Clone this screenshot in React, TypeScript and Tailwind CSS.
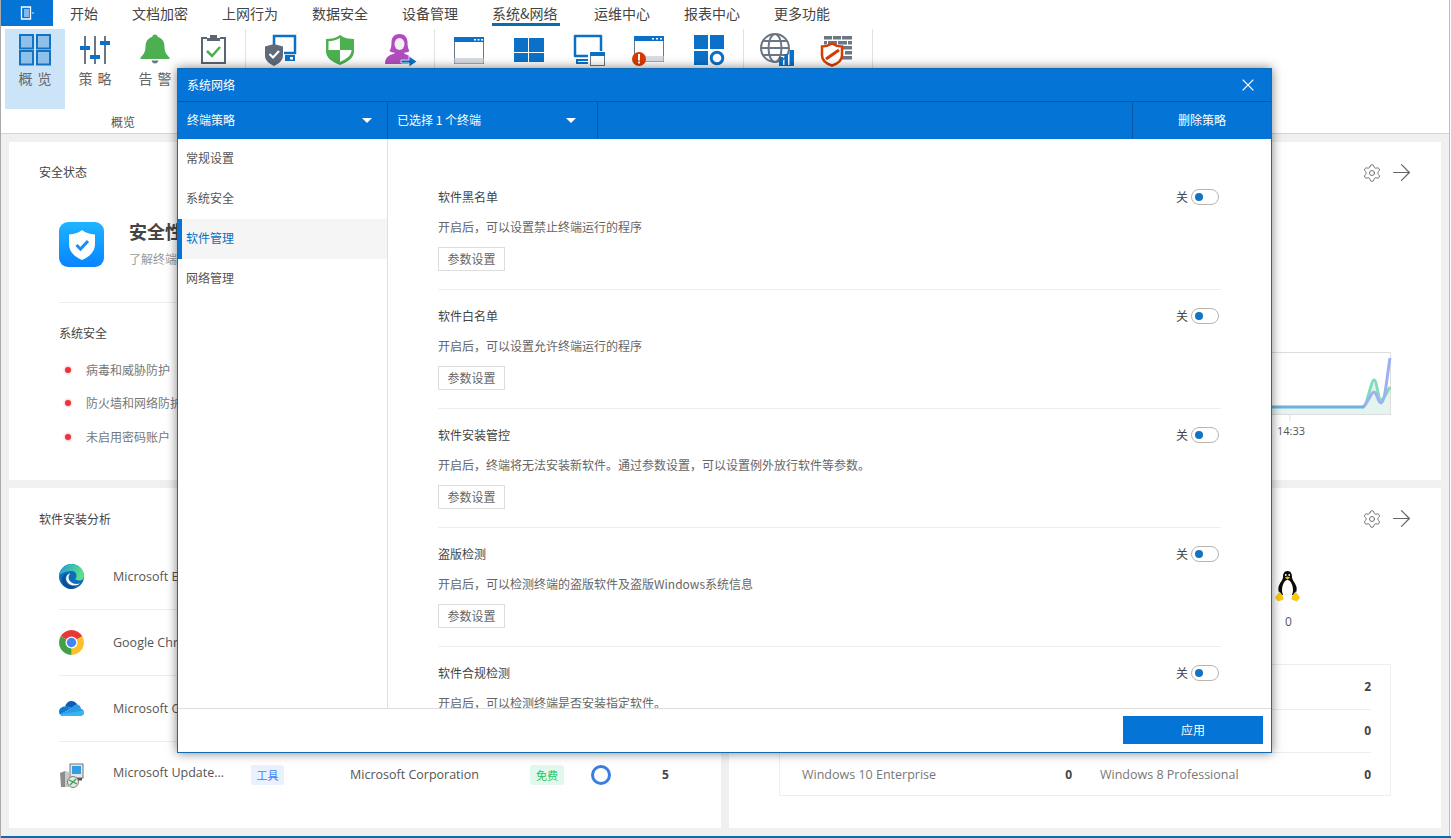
import { ArrowRight, Settings, X } from "lucide-react";

const TABS = ["开始", "文档加密", "上网行为", "数据安全", "设备管理", "系统&网络", "运维中心", "报表中心", "更多功能"];
const SECTIONS = [
  { title: "软件黑名单", desc: "开启后，可以设置禁止终端运行的程序" },
  { title: "软件白名单", desc: "开启后，可以设置允许终端运行的程序" },
  { title: "软件安装管控", desc: "开启后，终端将无法安装新软件。通过参数设置，可以设置例外放行软件等参数。" },
  { title: "盗版检测", desc: "开启后，可以检测终端的盗版软件及盗版Windows系统信息" },
  { title: "软件合规检测", desc: "开启后，可以检测终端是否安装指定软件。" },
];
const BLUE = "#0a70c8";
const GRAY = "#6b7785";
const GREEN = "#4caf50";
const RED = "#d83b01";

const Ico = ({ children }: { children: React.ReactNode }) => (
  <svg width="36" height="36" viewBox="0 0 36 36" className="overflow-visible">
    {children}
  </svg>
);

const IconOverview = () => (
  <Ico>
    {[[3, 3], [20, 3], [3, 19], [20, 19]].map(([x, y]) => (
      <rect key={`${x}-${y}`} x={x} y={y} width="13" height="13.5" fill="#8fc0ea" stroke="#1272c4" strokeWidth="2" />
    ))}
  </Ico>
);

const IconStrategy = () => (
  <Ico>
    <path d="M8 4v28M18 4v28M28 4v28" stroke={GRAY} strokeWidth="2" />
    <path d="M3 14h10v4H3zM13 23h10v4H13zM23 9h10v4H23z" fill={BLUE} />
  </Ico>
);

const IconBell = () => (
  <Ico>
    <path d="M18 2.500c1.700 0 2.600 1 2.800 2.400 4.700 1.300 6.700 5 6.700 10 0 5.200 2.300 7.700 5 10.600v1.500H3.500v-1.500c2.700-2.900 5-5.400 5-10.600 0-5 2-8.700 6.700-10C15.400 3.500 16.300 2.500 18 2.500z" fill={GREEN} />
    <path d="M14.500 28.500h7c-.5 2-1.800 3-3.500 3s-3-1-3.500-3z" fill={GRAY} />
  </Ico>
);

const IconClipboard = () => (
  <Ico>
    <path d="M12 6H7v25h23V6h-5" fill="#fff" stroke="#5a6672" strokeWidth="2" />
    <path d="M15 6V3h7v3h3v3H12V6z" fill="#5a6672" />
    <path d="M12 19l5 5 8-9" fill="none" stroke={GREEN} strokeWidth="2.500" />
  </Ico>
);

const IconShieldMonitor = () => (
  <Ico>
    <path d="M9 19V4h21v17h-11" fill="none" stroke={BLUE} strokeWidth="2.500" />
    <path d="M20 23h10v6H20z" fill={BLUE} />
    <rect x="25" y="25" width="3" height="2.500" fill="#fff" />
    <path d="M9 12l9 2.500v9c0 5-4 8-9 10.500-5-2.500-9-5.500-9-10.500v-9z" fill="#5f6b7a" />
    <path d="M4.500 22l3.500 3.500 6-6.500" fill="none" stroke="#fff" strokeWidth="2.200" />
  </Ico>
);

const IconShieldGreen = () => (
  <Ico>
    <path d="M17 3c4 3 9 4 14 4v12c0 7-6 11-14 14C9 30 3 26 3 19V7c5 0 10-1 14-4z" fill={GREEN} />
    <path d="M17 6c-3 2-7 3-11.500 3.300V18H17zM17 18h11.500c0 5.500-5 9-11.500 12z" fill="#fff" />
  </Ico>
);

const IconUser = () => (
  <Ico>
    <path d="M18.500 2c5 0 8 3.500 8 8 0 4 .5 7 2 9-1.500 1-3 1.500-5 1.500v1.500c2.500.8 4.500 1.500 6 3V32H4c0-6 3-9 9.500-10.500v-1c-2 0-3.500-.5-5-1.500 1.500-2 2-5 2-9 0-4.500 3-8 8-8z" fill="#b04dbd" />
    <ellipse cx="18.500" cy="12" rx="5" ry="6" fill="#fff" opacity="0.9" />
    <path d="M20 28h8v-4l8 5.500-8 5.500v-4h-8z" fill={BLUE} stroke="#fff" strokeWidth="0.800" />
  </Ico>
);

const IconWindow = () => (
  <Ico>
    <rect x="3.500" y="5.500" width="29" height="26" fill="#fff" stroke={GRAY} />
    <rect x="3" y="5" width="30" height="5" fill={BLUE} />
    <rect x="3.500" y="26" width="29" height="5.500" fill="#d9dde3" />
    <path d="M23 7h2v1.500h-2zM26.500 7h2v1.500h-2zM30 7h2v1.500h-2z" fill="#fff" />
  </Ico>
);

const IconWindows = () => (
  <Ico>
    <path d="M3 6h14v14H3zM18 6h15v14H18zM3 21h14v9H3zM18 21h15v9H18z" fill={BLUE} />
  </Ico>
);

const IconMonitorWindow = () => (
  <Ico>
    <path d="M17 24H4V4h26v15" fill="none" stroke={BLUE} strokeWidth="2.500" strokeLinejoin="round" />
    <path d="M5 27h12v2H7v1h10v2H5z" fill={BLUE} />
    <rect x="19.500" y="20.500" width="14" height="13" fill="#fff" stroke={GRAY} />
    <rect x="19" y="20" width="15" height="4" fill={BLUE} />
  </Ico>
);

const IconAlertWindow = () => (
  <Ico>
    <rect x="3.500" y="4.500" width="29" height="25" fill="#fff" stroke={GRAY} />
    <rect x="3" y="4" width="30" height="5" fill={BLUE} />
    <rect x="3.500" y="24" width="29" height="5.500" fill="#d9dde3" />
    <path d="M21 6h2v1.500h-2zM25 6h2v1.500h-2zM29 6h2v1.500h-2z" fill="#fff" />
    <circle cx="8" cy="27" r="7" fill={RED} />
    <path d="M7 22h2v6.500H7zM7 29.500h2v2H7z" fill="#fff" />
  </Ico>
);

const IconBlocks = () => (
  <Ico>
    <path d="M3 3h14v14H3zM19 3h14v14H19zM3 19h14v14H3z" fill={BLUE} />
    <circle cx="26" cy="26" r="5.800" fill="none" stroke={BLUE} strokeWidth="3" />
  </Ico>
);

const IconGlobe = () => (
  <Ico>
    <circle cx="16" cy="16" r="14" fill="#fff" stroke={GRAY} strokeWidth="2" />
    <ellipse cx="16" cy="16" rx="6.500" ry="14" fill="none" stroke={GRAY} strokeWidth="2" />
    <path d="M2 16h28M4 9h24M4 23h24" stroke={GRAY} strokeWidth="2" fill="none" />
    <path d="M20 25h4v9h-4zM25.500 22h3.500v12h-3.500zM30.500 18H35v16h-4.500z" fill={BLUE} />
    <path d="M20 33h15v1H20z" fill={BLUE} />
  </Ico>
);

const IconFirewall = () => (
  <Ico>
    <path d="M5 4h8v3.500H5zM14 4h8v3.500h-8zM23 4h10v3.500H23zM5 9h3v3.500H5zM9 9h9v3.500H9zM19 9h9v3.500h-9zM29 9h4v3.500h-4zM23 14h10v3.500H23zM26 19h7v3.500h-7zM23 24h10v3.500H23z" fill={GRAY} />
    <path d="M13 11.500c3 2 6 3 10 3v9c0 4.500-4 8-10 10-6-2-10-5.500-10-10v-9c4 0 7-1 10-3z" fill="#fff" stroke={RED} strokeWidth="2.500" />
    <path d="M7 27l13-9" stroke={RED} strokeWidth="3" />
  </Ico>
);

const RibbonButton = ({ icon, label, active, w }: { icon: React.ReactNode; label?: string; active?: boolean; w: string }) => (
  <div className={`${w} ${active ? "bg-[#cce4f7]" : ""} h-[80px] flex flex-col items-center pt-[3px]`}>
    <div className="h-[36px] w-[36px]">{icon}</div>
    {label && <div className="h-[20px] leading-[20px] text-[14px] text-[#666] tracking-[5px] pl-[5px]">{label}</div>}
  </div>
);

const EdgeLogo = () => (
  <svg width="25" height="25" viewBox="0 0 25 25">
    <defs>
      <linearGradient id="edgeA" x1="0" y1="0" x2="1" y2="0.3">
        <stop offset="0" stopColor="#1c9bd8" />
        <stop offset="1" stopColor="#5ce08a" />
      </linearGradient>
    </defs>
    <circle cx="12.500" cy="12.500" r="12.500" fill="#0f6cbd" />
    <path d="M.3 11C1.500 4.500 6.500 0 12.500 0 19.500 0 25 5.500 25 12c0 3-2 4.500-5 4.500-2 0-3.500-.7-3.500-1.700 0-.8 1-1 1-3C17.500 8.500 15 7 12 7 6 7 2.500 10 .3 11z" fill="url(#edgeA)" />
    <path d="M11.500 9.500c-3.500.5-5 3.500-4 7 1 3 4.500 5 8 5 2.500 0 4-.8 5.500-2-1 .3-2 .5-3.500.5-4.500 0-8-3-8-6.500 0-1.700.7-3 2-4z" fill="#fff" />
    <path d="M16.500 21.500c-4.500 1.500-10-1-10.500-6.500-.2-2.500 1-5 3-6.500C5 10 2.500 13 3 17c.5 4.500 5 8 9.500 8 1.500 0 3-.5 4-3.500z" fill="#0a4f96" />
  </svg>
);

const ChromeLogo = () => (
  <svg width="25" height="25" viewBox="0 0 25 25">
    <path d="M12.500 12.500L1.700 6.250A12.500 12.500 0 0 1 23.300 6.250z" fill="#e53935" />
    <path d="M12.500 12.500L23.300 6.250A12.500 12.500 0 0 1 12.500 25z" fill="#fbc02d" />
    <path d="M12.500 12.500L12.500 25A12.500 12.500 0 0 1 1.700 6.250z" fill="#43a047" />
    <circle cx="12.500" cy="12.500" r="6" fill="#fff" />
    <circle cx="12.500" cy="12.500" r="4.700" fill="#4285f4" />
  </svg>
);

const OneDriveLogo = () => (
  <svg width="25" height="25" viewBox="0 0 25 25">
    <path d="M6 10.500C7 7 9.500 5 12.500 5c2.500 0 4.500 1.300 5.700 3.500L13 12z" fill="#0a5fb4" />
    <path d="M6 10.500c-3.500 0-6 2.500-6 5.200 0 1.200.4 2.100 1 2.800l12-6.500z" fill="#0f78d4" />
    <path d="M18 8.500c-2 0-3.500.9-5 3.500L1 18.500C1.800 19.500 3 20 4 20h17c2.300 0 4-1.500 4-3.500 0-2-1.500-3.500-3-3.800-.5-2.500-1.800-4.200-4-4.200z" fill="#2a9be8" />
    <path d="M1 18.500C1.800 19.500 3 20 4 20h17c2.300 0 4-1.500 4-3.500 0-.8-.2-1.500-.6-2.100L10 17z" fill="#38b4ee" />
  </svg>
);

const InstallerLogo = () => (
  <svg width="25" height="25" viewBox="0 0 25 25">
    <path d="M1 10l5-2v16H2z" fill="#8d8d8d" />
    <path d="M6 8l4 1v15H6z" fill="#c9c9c9" />
    <rect x="11" y="1" width="13" height="14" fill="#e4e7ea" stroke="#555" strokeWidth="0.800" />
    <rect x="13" y="3" width="9" height="8" fill="#2e9fe6" />
    <rect x="10" y="15" width="13" height="2.500" fill="#555" />
    <circle cx="14" cy="19" r="5.500" fill="#dfe9df" stroke="#555" strokeWidth="0.700" />
    <path d="M10 17l8 4M11 22l6-6" stroke="#3d9b57" strokeWidth="1.200" />
  </svg>
);

const Penguin = () => (
  <svg width="25" height="31" viewBox="0 0 25 31">
    <path d="M12.500 0c3.500 0 4.500 3 4.500 6 0 3 3.500 6 4.500 10 .7 3-.5 6-1.500 8H5c-1-2-2.200-5-1.500-8C4.500 12 8 9 8 6c0-3 1-6 4.500-6z" fill="#0b0b0b" />
    <path d="M12.500 9c3 0 5.500 5 5.500 10 0 3-1 5-2 6H9c-1-1-2-3-2-6 0-5 2.500-10 5.500-10z" fill="#fff" />
    <path d="M9.800 6.500l2.700-1 2.700 1-2.700 2.200z" fill="#f0b90b" />
    <circle cx="10.800" cy="4" r="0.900" fill="#fff" />
    <circle cx="14.200" cy="4" r="0.900" fill="#fff" />
    <path d="M0 26.500l4.500-6 3.500 4.500.5 3.500-5.500 2zM25 26.500l-4.500-6-3.500 4.500-.5 3.500 5.500 2z" fill="#f6c915" />
  </svg>
);

const Toggle = () => (
  <div className="flex items-center gap-[3px] text-[12px] text-[#444]">
    <span>关</span>
    <div className="w-[28px] h-[16px] rounded-full border border-[#b9b4b0] flex items-center pl-[3px]">
      <div className="w-[8px] h-[8px] rounded-full bg-[#1272c4]" />
    </div>
  </div>
);

const CardIcons = () => (
  <div className="flex items-center justify-end gap-[6px] pr-[26px] text-[#666]">
    <Settings size={20} strokeWidth={1.100} />
    <ArrowRight size={27} strokeWidth={1.100} />
  </div>
);

const SoftwareRow = ({ logo, name }: { logo: React.ReactNode; name: string }) => (
  <div className="h-[66px] border-b border-[#eeeeee] flex items-center">
    <div className="w-[54px]">{logo}</div>
    <div className="pt-[1px] text-[12.500px] text-[#555]">{name}</div>
  </div>
);

const App = () => {
  return (
    <div className="relative w-[1451px] h-[838px] overflow-hidden bg-[#f0f0f0] border-l border-[#a9a9a9] flex flex-col font-['Noto_Sans_CJK_SC','Open_Sans',sans-serif]">
      {/* menu tabs */}
      <div className="h-[26px] bg-white flex items-center shrink-0">
        <div className="w-[52px] h-[26px] bg-[#0474d6] flex items-center justify-center gap-[2px] text-white">
          <svg width="14" height="14" viewBox="0 0 14 14">
            <path d="M1.500 1h9v12h-9z" fill="none" stroke="#fff" strokeWidth="1.300" />
            <path d="M4 4h5M4 6h5M4 8h5M4 10h5" stroke="#fff" />
            <circle cx="13" cy="7" r="0.800" fill="#fff" />
          </svg>
        </div>
        <div className="flex gap-[34px] ml-[17px]">
          {TABS.map((tab) => (
            <div
              key={tab}
              className={`h-[26px] leading-[26px] text-[14px] text-[#444] ${tab === "系统&网络" ? "w-[68px] border-b-[3px] border-[#0a6cb5]" : ""}`}
            >
              {tab}
            </div>
          ))}
        </div>
      </div>

      {/* ribbon */}
      <div className="h-[108px] bg-white border-b border-[#d5d5d5] flex pt-[3px] shrink-0">
        <div className="ml-[4px] w-[241px] border-r border-[#e2e2e2] flex flex-col h-[96px]">
          <div className="flex">
            <RibbonButton w="w-[60px]" active label="概览" icon={<IconOverview />} />
            <RibbonButton w="w-[60px]" label="策略" icon={<IconStrategy />} />
            <RibbonButton w="w-[60px]" label="告警" icon={<IconBell />} />
            <RibbonButton w="w-[56px]" icon={<IconClipboard />} />
          </div>
          <div className="mt-[4px] text-center text-[12px] leading-[18px] text-[#555] pr-[4px]">概览</div>
        </div>
        <div className="w-[189px] pl-[8px] border-r border-[#e2e2e2] flex h-[96px]">
          <RibbonButton w="w-[58px]" icon={<IconShieldMonitor />} />
          <RibbonButton w="w-[58px]" icon={<IconShieldGreen />} />
          <RibbonButton w="w-[58px]" icon={<IconUser />} />
        </div>
        <div className="w-[309px] pl-[4px] border-r border-[#e2e2e2] flex h-[96px]">
          <RibbonButton w="w-[60px]" icon={<IconWindow />} />
          <RibbonButton w="w-[60px]" icon={<IconWindows />} />
          <RibbonButton w="w-[60px]" icon={<IconMonitorWindow />} />
          <RibbonButton w="w-[60px]" icon={<IconAlertWindow />} />
          <RibbonButton w="w-[60px]" icon={<IconBlocks />} />
        </div>
        <div className="w-[129px] pl-[3px] border-r border-[#e2e2e2] flex h-[96px]">
          <RibbonButton w="w-[60px]" icon={<IconGlobe />} />
          <RibbonButton w="w-[60px]" icon={<IconFirewall />} />
        </div>
      </div>

      {/* dashboard */}
      <div className="grid grid-cols-[712px_712px] grid-rows-[338px_340px] gap-[8px] pl-[8px] pt-[8px]">
        <div className="bg-white pl-[30px] pt-[22px]">
          <div className="text-[12px] leading-[16px] text-[#444]">安全状态</div>
          <div className="mt-[42px] ml-[20px] flex gap-[25px]">
            <div className="w-[45px] h-[45px] rounded-[9px] bg-gradient-to-b from-[#20b4ff] to-[#0a84ff] flex items-center justify-center">
              <svg width="26" height="30" viewBox="0 0 26 30">
                <path d="M13 0c3 2.500 7 4 13 4.500V14c0 7.500-5 12.500-13 16C5 26.500 0 21.500 0 14V4.500C6 4 10 2.500 13 0z" fill="#fff" />
                <path d="M7.500 15l4 4 7.500-8" fill="none" stroke="#1b8cf2" strokeWidth="3" />
              </svg>
            </div>
            <div className="-mt-[3px]">
              <div className="text-[18px] leading-[24px] font-bold text-[#444]">安全性</div>
              <div className="mt-[8px] text-[12px] leading-[16px] text-[#999]">了解终端</div>
            </div>
          </div>
          <div className="mt-[35px] ml-[20px] mr-[30px] border-t border-[#eeeeee]" />
          <div className="mt-[22px] ml-[20px] text-[12px] leading-[16px] text-[#444]">系统安全</div>
          <div className="mt-[12px] ml-[20px]">
            {["病毒和威胁防护", "防火墙和网络防护", "未启用密码账户"].map((item) => (
              <div key={item} className="h-[33.500px] flex items-center text-[12px] text-[#777]">
                <div className="ml-[6px] mr-[15px] w-[6px] h-[6px] rounded-full bg-[#e8333c] shadow-[0_0_3px_#f08a8f]" />
                {item}
              </div>
            ))}
          </div>
        </div>

        <div className="bg-white pt-[17px]">
          <CardIcons />
          <div className="mt-[166px] ml-[50px] w-[612px] h-[63px] border border-[#dddddd]">
            <svg width="610" height="61" viewBox="1 1 610 61" className="overflow-visible">
              <path d="M0 55H584C588 55 592 28 595 28C598 28 599 48 602 48C605 48 608 40 611 35V62H0z" fill="#e3f5ee" />
              <path d="M584 55C588 55 592 28 595 28C598 28 599 48 602 48C605 48 608 40 611 35" fill="none" stroke="#82dcb8" strokeWidth="3" />
              <path d="M584 55C588 53 592 40 595 40C598 40 599 51 602 51C606 51 608 24 611 6" fill="none" stroke="#9db1f2" strokeWidth="3" />
              <path d="M0 55H585" stroke="#6fb0dc" strokeWidth="3" />
              <path d="M511 63v6" stroke="#dddddd" />
            </svg>
          </div>
          <div className="mt-[8px] ml-[548px] text-[11px] leading-[16px] text-[#555] font-['Open_Sans',sans-serif]">14:33</div>
        </div>

        <div className="bg-white pl-[30px] pt-[23px]">
          <div className="text-[12px] leading-[16px] text-[#444]">软件安装分析</div>
          <div className="mt-[17px] ml-[20px] mr-[30px] font-['Open_Sans',sans-serif]">
            <SoftwareRow logo={<EdgeLogo />} name="Microsoft Edge" />
            <SoftwareRow logo={<ChromeLogo />} name="Google Chrome" />
            <SoftwareRow logo={<OneDriveLogo />} name="Microsoft OneDrive" />
            <div className="h-[66px] flex items-center">
              <div className="w-[54px]">
                <InstallerLogo />
              </div>
              <div className="w-[138px] -mt-[3px] text-[12.500px] text-[#555]">Microsoft Update...</div>
              <div className="w-[33px] h-[20px] rounded-[3px] bg-[#e8f1fd] text-[#3b82f6] text-[11px] leading-[20px] text-center font-['Noto_Sans_CJK_SC']">工具</div>
              <div className="ml-[66px] w-[180px] text-[12.500px] text-[#555]">Microsoft Corporation</div>
              <div className="w-[34px] h-[20px] rounded-[3px] bg-[#e3f8ec] text-[#22c55e] text-[11px] leading-[20px] text-center font-['Noto_Sans_CJK_SC']">免费</div>
              <div className="ml-[27px] w-[20px] h-[20px] rounded-full border-[3px] border-[#3b7de0]" />
              <div className="ml-[51px] text-[12px] font-bold text-[#444]">5</div>
            </div>
          </div>
        </div>

        <div className="bg-white pt-[17px]">
          <CardIcons />
          <div className="mt-[39px] ml-[546px] w-[25px]">
            <Penguin />
            <div className="mt-[12px] pl-[2px] text-center text-[12px] leading-[16px] text-[#555] font-['Open_Sans',sans-serif]">0</div>
          </div>
          <div className="mt-[34px] ml-[50px] w-[612px] h-[132px] border border-[#eeeeee] pt-[1px] pl-[22px] font-['Open_Sans',sans-serif] text-[12px]">
            {[["", "", "2"], ["", "", "0"], ["Windows 10 Enterprise", "Windows 8 Professional", "0"]].map(([a, b, n], i) => (
              <div key={i} className="grid grid-cols-[270px_271px] gap-[28px] h-[43.700px]">
                <div className={`flex items-center justify-between ${i < 2 ? "border-b border-[#eeeeee]" : ""}`}>
                  <span className="text-[#777] text-[12.500px]">{a}</span>
                  <b className="text-[#444]">0</b>
                </div>
                <div className={`flex items-center justify-between ${i < 2 ? "border-b border-[#eeeeee]" : ""}`}>
                  <span className="text-[#777] text-[12.500px]">{b}</span>
                  <b className="text-[#444]">{n}</b>
                </div>
              </div>
            ))}
          </div>
        </div>
      </div>

      {/* bottom edge of the window */}
      <div className="absolute left-0 right-0 bottom-0 h-[2px] bg-[#0a6cb5]" />
      <div className="absolute right-0 top-0 bottom-[2px] w-[2px] bg-white border-l border-[#bdbdbd]" />

      {/* dialog */}
      <div className="absolute left-[176px] top-[68px] w-[1095px] h-[685px] bg-white border border-[#0f6cb5] shadow-[0_0_10px_rgba(0,0,0,0.5)] flex flex-col text-[12px]">
        <div className="h-[32px] bg-[#0474d6] flex items-center justify-between pl-[9px] pr-[13px] text-white shrink-0">
          <span>系统网络</span>
          <X size={20} strokeWidth={1.300} />
        </div>
        <div className="h-[38px] bg-[#0474d6] border-t border-[#0a58a5] flex text-white shrink-0">
          <div className="w-[210px] border-r border-[#0a58a5] flex items-center justify-between pl-[9px] pr-[15px]">
            <span className="-mt-[1px]">终端策略</span>
            <span className="w-0 h-0 border-x-[5px] border-x-transparent border-t-[5px] border-t-white" />
          </div>
          <div className="w-[210px] border-r border-[#0a58a5] flex items-center justify-between pl-[9px] pr-[21px]">
            <span className="-mt-[1px]">已选择 1 个终端</span>
            <span className="w-0 h-0 border-x-[5px] border-x-transparent border-t-[5px] border-t-white" />
          </div>
          <div className="flex-1 border-r border-[#0a58a5]" />
          <div className="w-[138px] pl-[45px] pb-[1px] flex items-center">删除策略</div>
        </div>
        <div className="flex-1 flex min-h-0">
          <div className="w-[210px] border-r border-[#e0e0e0] shrink-0">
            {["常规设置", "系统安全", "软件管理", "网络管理"].map((item) => (
              <div
                key={item}
                className={
                  item === "软件管理"
                    ? "h-[40px] flex items-center pl-[4px] pb-[2px] bg-[#f5f5f5] border-l-[4px] border-[#0474d6] text-[#0a6fc2]"
                    : "h-[40px] flex items-center pl-[8px] pb-[2px] text-[#555]"
                }
              >
                {item}
              </div>
            ))}
          </div>
          <div className="flex-1 overflow-hidden pl-[50px] pt-[32px]">
            <div className="w-[783px]">
              {SECTIONS.map((s, i) => (
                <div key={s.title} className="h-[119px] border-b border-[#eeeeee] pt-[18px]">
                  <div className="h-[16px] flex items-center justify-between pr-[2px]">
                    <span className="text-[#444]">{s.title}</span>
                    <Toggle />
                  </div>
                  <div className="mt-[14px] h-[16px] leading-[16px] text-[#666]">{s.desc}</div>
                  {i < 4 && (
                    <button className="mt-[12px] w-[67px] h-[24px] border border-[#dddddd] text-[#666] text-[12px]">参数设置</button>
                  )}
                </div>
              ))}
            </div>
          </div>
        </div>
        <div className="h-[44px] border-t border-[#dddddd] flex justify-end pt-[7px] pr-[8px] shrink-0">
          <button className="w-[140px] h-[28px] bg-[#0474d6] text-white text-[12px]">应用</button>
        </div>
      </div>
    </div>
  );
};

export default App;
